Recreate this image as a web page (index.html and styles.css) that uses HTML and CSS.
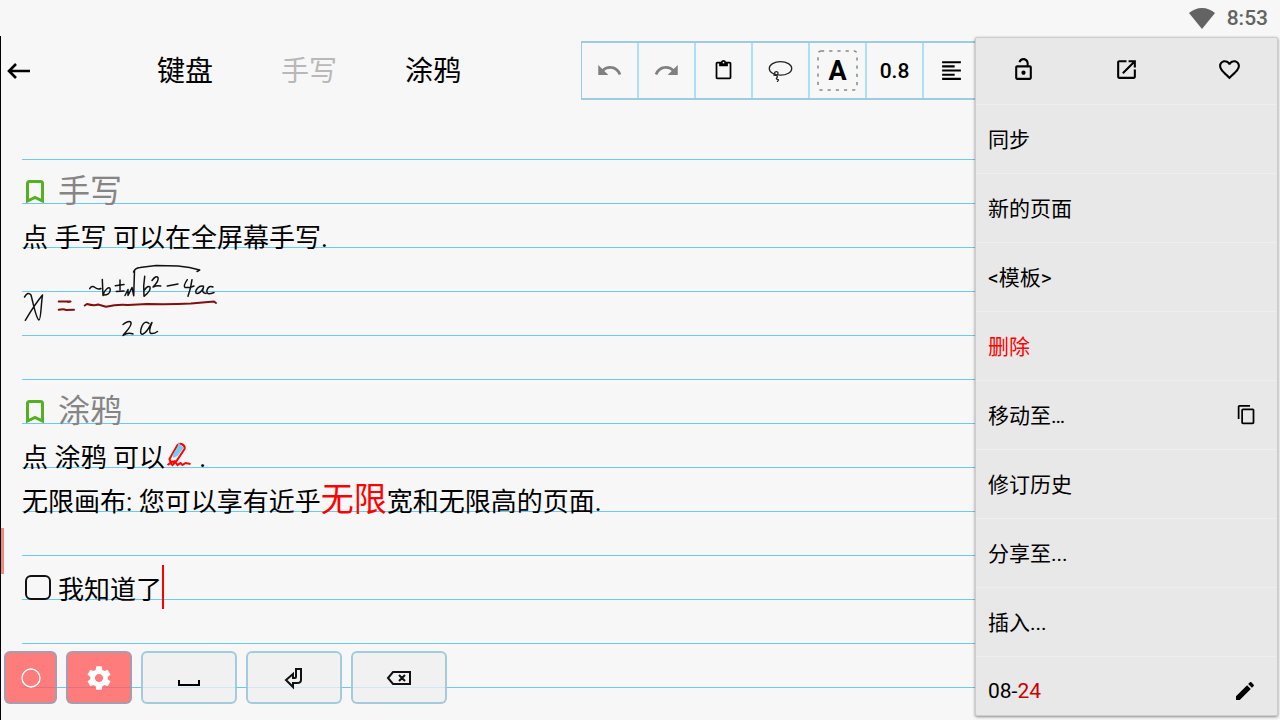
FILE: index.html
```html
<!DOCTYPE html>
<html lang="zh-CN">
<head>
<meta charset="utf-8">
<meta name="viewport" content="width=device-width, initial-scale=1">
<title>手写</title>
<link rel="stylesheet" href="styles.css">
</head>
<body>
<div class="status">
  <svg class="wifi" viewBox="0 0 26 21" aria-hidden="true"><path d="M13 21 0 5C3.500 2 8 0 13 0s9.500 2 13 5z"/></svg>
  <time>8:53</time>
</div>
<div class="app">
  <header class="bar">
    <button class="back" aria-label="返回"><svg viewBox="0 0 24 16"><path d="M2 8h21M9 1 2 8l7 7" fill="none" stroke="#000" stroke-width="2.600"/></svg></button>
    <nav class="tabs">
      <button class="tab">键盘</button>
      <button class="tab tab-off">手写</button>
      <button class="tab">涂鸦</button>
    </nav>
    <div class="tools">
      <button class="tool" aria-label="撤销"><svg class="grey" viewBox="0 0 24 24"><path d="M12.500 8c-2.650 0-5.050.990-6.900 2.600L2 7v9h9l-3.620-3.620c1.390-1.160 3.160-1.880 5.120-1.880 3.540 0 6.550 2.310 7.600 5.500l2.370-.780C21.080 11.030 17.150 8 12.500 8z"/></svg></button>
      <button class="tool" aria-label="重做"><svg class="grey" viewBox="0 0 24 24"><path d="M18.400 10.600C16.550 8.990 14.150 8 11.500 8c-4.650 0-8.580 3.030-9.960 7.220L3.900 16c1.050-3.190 4.050-5.500 7.600-5.500 1.950 0 3.730.720 5.120 1.880L13 16h9V7l-3.600 3.600z"/></svg></button>
      <button class="tool" aria-label="粘贴"><svg class="small" viewBox="0 0 24 24"><path d="M19 2h-4.180C14.400.840 13.300 0 12 0S9.600.840 9.180 2H5c-1.100 0-2 .900-2 2v16c0 1.100.900 2 2 2h14c1.100 0 2-.900 2-2V4c0-1.100-.900-2-2-2zm-7 0c.550 0 1 .450 1 1s-.450 1-1 1-1-.450-1-1 .450-1 1-1zm7 18H5V4h2v3h10V4h2v16z"/></svg></button>
      <button class="tool" aria-label="套索"><svg viewBox="0 0 24 24" fill="none" stroke="#222" stroke-width="1.200"><ellipse cx="12" cy="10" rx="10.800" ry="6.500"/><path d="M5 16c1 1 3 1 4 0s1-3-1-3-2 2-1 3 2 1 2 2-1 1-1 2 2 0 2 1-1 1-1 2"/></svg></button>
      <button class="tool letter"><svg class="frame" viewBox="0 0 41 41" aria-hidden="true"><rect x="1" y="1" width="39" height="39" rx="3"/></svg>A</button>
      <button class="tool number">0.8</button>
      <button class="tool" aria-label="对齐"><svg viewBox="0 0 24 24" fill="none" stroke="#000" stroke-width="2"><path d="M3 4h18M3 8h12M3 12h18M3 16h12M3 20h18"/></svg></button>
    </div>
  </header>
  <main class="sheet">
    <h2 class="line title"><svg viewBox="0 0 18 23"><path d="M1.500 3.500q0-2 2-2h11q2 0 2 2v17.500L9 17.500l-7.500 3.500z"/></svg>手写</h2>
    <p class="line">点 手写 可以在全屏幕手写.</p>
    <svg class="ink" viewBox="0 12 200 88" role="img" aria-label="x = (-b ± √(b² - 4ac)) / 2a">
      <g class="black">
        <path d="M2.500 49Q6 43 9 47C11 54 14 71 17 72 19 72 19 56 20.500 47Q13 56 3.300 72.300"/>
        <path d="M67.700 40.700Q70 37 73 39.500T79 40.500"/>
        <path d="M80.300 31.500L81 47.500C82 42 88 37 88.300 41.700Q88 47 81.500 47"/>
        <path d="M93.300 37.700L102 36.500M98 32V41.700M94.300 43.500L102 43"/>
        <path d="M103 47.500L106 41.500 106 47.500 110 39.500 111.700 47.700 112.500 22.500M111.500 24Q113 20 118 19.500L134 17.500 156 18Q168 19 177.700 22L175 23.500"/>
        <path d="M122.700 28.300Q121 38 122 48.300C125 46 129 42 128 39Q126 37 122.500 42"/>
        <path d="M130 32.500Q134 27 136 29.500C137 32 134 36 131 39Q135 37 138.700 38"/>
        <path d="M145.300 38L156 36"/>
        <path d="M165.300 31.700Q161 38 163 39.500 168 40 172 38M170 31.700Q169 40 166 48.300"/>
        <path d="M181.500 38.300C177 37 173 42 174 45 176 47 180 43 181.500 39.500Q179 45 184 45.500"/>
        <path d="M191 39Q187 37 185 42C184 47 188 46 192 44.500"/>
        <path d="M101 76.500Q107 72 109 74.500C110 79 103 84 101 87.500Q106 84 111 86"/>
        <path d="M127 75.500Q123 72 120 78C118 83 118 87 121 86 126 84 129 75 130 74.500Q126 84 129 85.500 132 86 135.500 83.500"/>
      </g>
      <path class="red" d="M36.700 53.500H48.500L46 54M36.700 61.700Q42 60.500 44 62L52 61.700M62.700 57.500L65 56Q72 58 76 56.500L84 58.700Q96 56 106 57L125 56Q150 56.500 169 55.500L192 53.500 194 55"/>
    </svg>
    <div class="line"></div>
    <h2 class="line title"><svg viewBox="0 0 18 23"><path d="M1.500 3.500q0-2 2-2h11q2 0 2 2v17.500L9 17.500l-7.500 3.500z"/></svg>涂鸦</h2>
    <p class="line">点 涂鸦 可以<svg class="doodle" viewBox="0 0 25 25" aria-hidden="true"><path d="M3 17 11 3q2-2 4-1 4 2 3 5l-8 12-6 1zM1 23l3-2 2 2 3-3 2 3 3-2 2 2 3-2 5 1" fill="none" stroke="#f00" stroke-width="2"/><path d="M6 13l5-8 1-5 2 3 3 3-6 8-4 2z" fill="#72cdf4"/></svg> .</p>
    <p class="line">无限画布: 您可以享有近乎<em>无限</em>宽和无限高的页面.</p>
    <div class="line"></div>
    <label class="line check"><input type="checkbox">我知道了<span class="caret"></span></label>
  </main>
  <div class="marker"></div>
  <div class="keys">
    <button class="key red-key round-key" aria-label="圆"><svg viewBox="0 0 24 24"><circle cx="12" cy="12" r="9" fill="none" stroke="#fff" stroke-width="1.400"/></svg></button>
    <button class="key red-key gear-key" aria-label="设置"><svg viewBox="0 0 24 24" fill="#fff"><path d="M19.430 12.980c.040-.320.070-.640.070-.980s-.030-.660-.070-.980l2.110-1.650c.190-.150.240-.420.120-.640l-2-3.460c-.120-.220-.390-.300-.610-.220l-2.490 1c-.520-.400-1.080-.730-1.690-.980l-.380-2.650C14.460 2.180 14.250 2 14 2h-4c-.250 0-.460.180-.490.420l-.380 2.650c-.610.250-1.170.590-1.690.980l-2.490-1c-.230-.090-.490 0-.610.220l-2 3.460c-.130.220-.070.490.120.640l2.110 1.650c-.040.320-.070.650-.070.980s.030.660.070.980l-2.110 1.650c-.190.150-.240.420-.120.640l2 3.460c.120.220.390.300.610.220l2.490-1c.520.400 1.080.730 1.690.980l.380 2.650c.030.240.240.420.490.420h4c.250 0 .460-.180.490-.420l.380-2.650c.610-.250 1.170-.590 1.690-.980l2.490 1c.230.090.490 0 .610-.220l2-3.460c.120-.220.070-.490-.120-.640l-2.110-1.650zM12 15.500c-1.930 0-3.500-1.570-3.500-3.500s1.570-3.500 3.500-3.500 3.500 1.570 3.500 3.500-1.570 3.500-3.500 3.500z"/></svg></button>
    <button class="key" aria-label="空格"><svg viewBox="0 0 26 24" fill="none" stroke="#000" stroke-width="2"><path d="M3 14v5h20v-5"/></svg></button>
    <button class="key" aria-label="换行"><svg viewBox="0 0 26 24" fill="none" stroke="#111" stroke-width="2"><path d="M15 3h5v11q0 3-4 3h-4v4l-7-7 7-6v4h2q1 0 1-1z"/></svg></button>
    <button class="key" aria-label="退格"><svg viewBox="0 0 26 24" fill="none" stroke="#111" stroke-width="2"><path d="M7 6h17v12H7l-5-6zM13 9l6 6m0-6-6 6"/></svg></button>
  </div>
</div>
<aside class="menu">
  <div class="quick">
    <button aria-label="锁定"><svg viewBox="0 0 24 24"><path d="M12 17c1.100 0 2-.900 2-2s-.900-2-2-2-2 .900-2 2 .900 2 2 2zm6-9h-1V6c0-2.760-2.240-5-5-5-2.280 0-4.270 1.540-4.840 3.750l1.940.490C9.440 3.930 10.630 3 12 3c1.650 0 3 1.350 3 3v2H6c-1.100 0-2 .900-2 2v10c0 1.100.900 2 2 2h12c1.100 0 2-.900 2-2V10c0-1.100-.900-2-2-2zm0 12H6V10h12v10z"/></svg></button>
    <button aria-label="打开"><svg viewBox="0 0 24 24"><path d="M19 19H5V5h7V3H5c-1.110 0-2 .900-2 2v14c0 1.100.890 2 2 2h14c1.100 0 2-.900 2-2v-7h-2v7zM14 3v2h3.590l-9.830 9.830 1.410 1.410L19 6.410V10h2V3h-7z"/></svg></button>
    <button aria-label="收藏"><svg viewBox="0 0 24 24"><path d="M16.500 3c-1.740 0-3.410.810-4.500 2.090C10.910 3.810 9.240 3 7.500 3 4.420 3 2 5.420 2 8.500c0 3.780 3.400 6.860 8.550 11.540L12 21.350l1.450-1.320C18.600 15.360 22 12.280 22 8.500 22 5.420 19.580 3 16.500 3zm-4.400 15.550l-.100.100-.100-.100C7.140 14.240 4 11.390 4 8.500 4 6.500 5.500 5 7.500 5c1.540 0 3.040.990 3.570 2.360h1.870C13.460 5.990 14.960 5 16.500 5c2 0 3.500 1.500 3.500 3.500 0 2.890-3.140 5.740-7.900 10.050z"/></svg></button>
  </div>
  <button class="item">同步</button>
  <button class="item">新的页面</button>
  <button class="item">&lt;模板&gt;</button>
  <button class="item danger">删除</button>
  <button class="item">移动至…<svg viewBox="0 0 24 24"><path d="M16 1H4c-1.100 0-2 .900-2 2v14h2V3h12V1zm3 4H8c-1.100 0-2 .900-2 2v14c0 1.100.900 2 2 2h11c1.100 0 2-.900 2-2V7c0-1.100-.900-2-2-2zm0 16H8V7h11v14z"/></svg></button>
  <button class="item">修订历史</button>
  <button class="item">分享至...</button>
  <button class="item">插入...</button>
  <button class="item date"><span>08-<span class="day">24</span></span><svg viewBox="0 0 24 24"><path d="M3 17.250V21h3.750L17.810 9.940l-3.750-3.750L3 17.250zM20.710 7.040c.390-.390.390-1.020 0-1.410l-2.340-2.340c-.390-.390-1.020-.390-1.410 0l-1.830 1.830 3.750 3.750 1.830-1.830z"/></svg></button>
</aside>
</body>
</html>
```
FILE: styles.css
```css
* { box-sizing: border-box; }
body {
  margin: 0;
  height: 100vh;
  display: flex;
  flex-direction: column;
  overflow: hidden;
  position: relative;
  background: #f7f7f7;
  color: #000;
  font-family: Roboto, "Noto Sans CJK SC", sans-serif;
}
button {
  margin: 0;
  padding: 0;
  border: 0;
  background: none;
  color: inherit;
  font: inherit;
  display: flex;
  align-items: center;
  justify-content: center;
}
svg { display: block; flex: none; }
.status {
  height: 36px;
  flex: none;
  display: flex;
  align-items: center;
  justify-content: flex-end;
  gap: 12px;
  padding: 0 12px 0 0;
  color: #636363;
  font-size: 21px;
  font-weight: 500;
}
.wifi { width: 26px; height: 21px; fill: #636363; }
.app {
  flex: 1;
  min-height: 0;
  display: flex;
  flex-direction: column;
  position: relative;
  border-left: 1px solid #000;
  padding-right: 6px;
}
.bar {
  flex: none;
  height: 80px;
  display: flex;
  align-items: flex-start;
  padding-top: 5px;
}
.back { width: 36px; height: 60px; }
.back svg { width: 24px; height: 16px; }
.tabs { display: flex; padding-left: 86px; width: 544px; flex: none; }
.tab { width: 124px; height: 56px; font-size: 28px; }
.tab-off { color: #b8b8b8; }
.tools {
  flex: 1;
  display: flex;
  height: 59px;
  overflow: hidden;
  border: 2px solid #9fcbde;
  border-left-width: 1px;
}
.tool { width: 57px; flex: none; border-right: 2px solid #ace0f4; }
.tool svg { width: 25px; height: 25px; }
.tool .small { width: 21px; height: 21px; }
.tool .grey { fill: #808080; width: 27px; height: 27px; }
.letter { position: relative; font-size: 27px; font-weight: 700; }
.tool .frame {
  position: absolute;
  inset: 7px;
  width: 41px;
  height: 41px;
  fill: none;
  stroke: #888;
  stroke-width: 1.5px;
  stroke-dasharray: 3.200 5;
}
.number { font-size: 21px; font-weight: 500; }
.sheet {
  flex: 1;
  min-height: 0;
  margin-left: 21px;
  padding-top: 56px;
  font-size: 26px;
  background: repeating-linear-gradient(to bottom, transparent 0, transparent 43px, #6bc9f2 43px, #6bc9f2 44px);
}
.line {
  height: 44px;
  line-height: 44px;
  margin: 0;
  font-weight: 400;
  white-space: nowrap;
}
.title {
  display: flex;
  align-items: center;
  gap: 14px;
  padding: 0 0 6px 4px;
  line-height: 38px;
  font-size: 32px;
  color: #858585;
}
.title svg { width: 18px; height: 23px; fill: none; stroke: #55b021; stroke-width: 3px; }
.ink { width: 200px; height: 88px; fill: none; stroke-linecap: round; stroke-linejoin: round; }
.black { stroke: #111; stroke-width: 1.5px; }
.red { stroke: #800f0f; stroke-width: 2px; }
.doodle { display: inline-block; width: 28px; height: 25px; }
em { font-style: normal; font-size: 33px; line-height: 0; color: #f00; }
.check { display: flex; align-items: center; }
.check input {
  appearance: none;
  width: 26px;
  height: 25px;
  margin: 0 7px 6px 3px;
  border: 2px solid #111;
  border-radius: 6px;
}
.caret { width: 2px; height: 44px; margin-bottom: 6px; background: #f00; }
.marker { position: absolute; left: 0; top: 492px; width: 3px; height: 46px; background: #ee8a84; }
.keys { position: absolute; left: 3px; bottom: 16px; display: flex; gap: 9px; }
.key {
  width: 96px;
  height: 53px;
  border: 2px solid rgba(110, 180, 208, .6);
  border-radius: 6px;
  background: rgba(239, 239, 239, .8);
}
.key svg { width: 26px; height: 24px; }
.red-key { background: rgba(255, 92, 92, .8); }
.round-key { width: 53px; }
.gear-key { width: 66px; }
.gear-key svg { width: 28px; height: 28px; }
.menu {
  position: absolute;
  top: 37px;
  bottom: 4px;
  right: 2px;
  width: 303px;
  overflow: hidden;
  background: #e8e8e8;
  border: 1px solid #cdcdcd;
  border-radius: 2px;
  box-shadow: 0 1px 3px rgba(0, 0, 0, .45);
}
.quick { height: 67px; display: flex; justify-content: space-between; padding: 0 35px 3px; border-bottom: 1px solid #eee; }
.quick svg { width: 25px; height: 25px; }
.item {
  width: 100%;
  height: 69px;
  padding: 0 20px 2px 12px;
  border-bottom: 1px solid #eee;
  justify-content: space-between;
  font-size: 21px;
}
.item svg { width: 21px; height: 21px; }
.date { padding-bottom: 0; }
.date svg { width: 24px; height: 24px; }
.danger { color: #f00; }
.day { color: #c80000; }
```
